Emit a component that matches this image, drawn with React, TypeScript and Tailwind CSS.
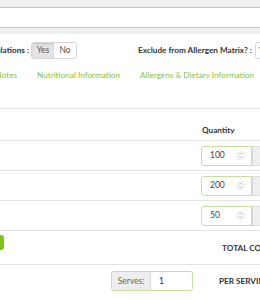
import React from 'react';

const rows = ['100', '200', '50'];

function Spinner() {
  return (
    <svg width="9" height="11" viewBox="0 0 9 11" className="shrink-0">
      <circle cx="4.5" cy="5.5" r="4" fill="none" stroke="#dcdcdc" strokeWidth="0.8" />
      <path d="M3 4.6 L4.5 3.1 L6 4.6 M3 6.4 L4.5 7.9 L6 6.4" fill="none" stroke="#a0a0a0" strokeWidth="0.9" />
    </svg>
  );
}

function QtyInput({ value }: { value: string }) {
  return (
    <div className="flex h-[20px] ml-[201px] shrink-0">
      <div className="w-[51px] shrink-0 flex items-center justify-between pl-[8px] pr-[6px] border border-[#c3e29d] rounded-l-[3px] bg-white text-[8.5px] text-[#444]">
        <span>{value}</span>
        <Spinner />
      </div>
      <div className="w-[30px] shrink-0 bg-[#eeeeee] border border-[#dddddd]" />
    </div>
  );
}

export default function App() {
  return (
    <div className="w-[260px] h-[300px] overflow-hidden bg-white text-[#333] font-['Lato','Open_Sans',sans-serif]">
      <div className="h-[7px] bg-[#f0f0f0]" />
      <div className="h-[1px] bg-[#b3da88]" />
      <div className="h-[19px] bg-white" />
      <div className="h-[1px] bg-[#b3da88]" />
      <div className="h-[6px] bg-[#f0f0f0]" />

      <div className="flex items-center h-[17px] mt-[8px] text-[8.2px]">
        <div className="w-[29px] shrink-0 flex justify-end overflow-hidden whitespace-nowrap font-bold">
          <span className="shrink-0">Include in Calculations :</span>
        </div>
        <div className="ml-[2px] flex h-[17px] border border-[#d6d6d6] rounded-[3px] overflow-hidden text-[8.5px] text-[#555] shrink-0">
          <div className="w-[22px] flex items-center justify-center bg-[#e4e4e4] shadow-[inset_0_1px_2px_rgba(0,0,0,0.15)]">Yes</div>
          <div className="w-[22px] flex items-center justify-center bg-white">No</div>
        </div>
        <div className="ml-[61px] shrink-0 whitespace-nowrap font-bold">Exclude from Allergen Matrix? :</div>
        <div className="ml-[3px] w-[40px] h-[17px] border border-[#d6d6d6] rounded-[3px] shrink-0 pl-[3px] flex items-center">Yes</div>
      </div>

      <div className="flex items-center h-[14px] mt-[9px] text-[8.2px] text-[#84c441] whitespace-nowrap">
        <div className="w-[17px] shrink-0 flex justify-end overflow-hidden">
          <span className="shrink-0">Recipe Notes</span>
        </div>
        <div className="ml-[20px] shrink-0">Nutritional Information</div>
        <div className="ml-[20px] shrink-0">Allergens &amp; Dietary Information</div>
      </div>

      <div className="mt-[26px] border-t border-[#e3e3e3]">
        <div className="h-[32px] flex items-end pb-[4px] pl-[202px] text-[8.2px] font-bold border-b border-[#e3e3e3] whitespace-nowrap">
          Quantity
        </div>
        {rows.map((r) => (
          <div key={r} className="h-[30px] flex items-center border-b border-[#e3e3e3]">
            <QtyInput value={r} />
          </div>
        ))}
        <div className="h-[34px] flex items-start border-b border-[#e3e3e3] whitespace-nowrap">
          <div className="mt-[4px] w-[4px] overflow-hidden flex justify-end shrink-0">
            <div className="h-[15px] px-[6px] shrink-0 rounded-[3px] bg-[#7dc511] text-white text-[8.2px] flex items-center">Add</div>
          </div>
          <div className="mt-[11px] ml-[218px] shrink-0 text-[8.2px] font-bold">TOTAL COST</div>
        </div>
        <div className="h-[32px] flex items-center whitespace-nowrap">
          <div className="ml-[111px] flex h-[20px] border border-[#c3e29d] rounded-[3px] overflow-hidden text-[8.5px] shrink-0">
            <div className="w-[39px] flex items-center justify-center bg-[#eeeeee] text-[#666] border-r border-[#dcdcdc]">Serves:</div>
            <div className="w-[41px] flex items-center pl-[8px] bg-white">1</div>
          </div>
          <div className="ml-[26px] shrink-0 text-[8.2px] font-bold">PER SERVING</div>
        </div>
      </div>
    </div>
  );
}
